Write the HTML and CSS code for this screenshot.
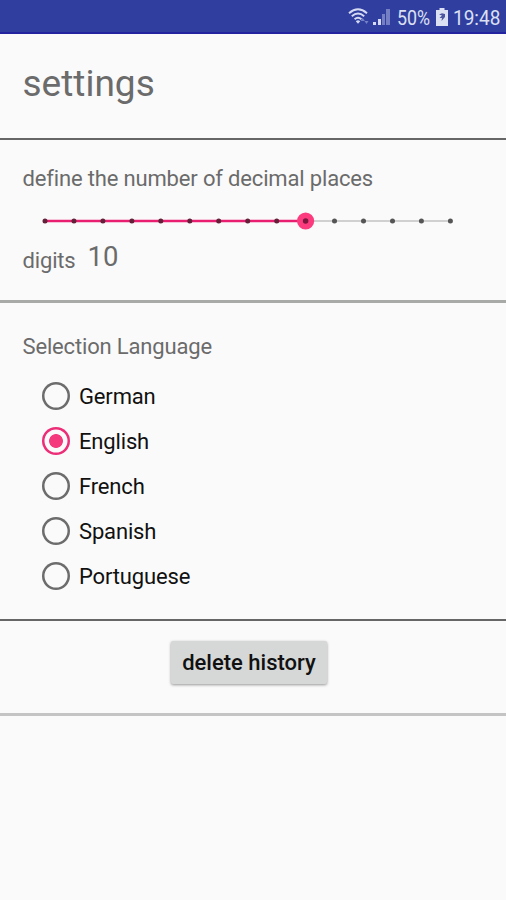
FILE: index.html
```html
<!DOCTYPE html>
<html lang="en">
<head>
<meta charset="utf-8">
<title>settings</title>
<link rel="stylesheet" href="styles.css">
</head>
<body>
<header class="status">
  <svg class="wifi" width="23" height="20" viewBox="0 0 23 20" fill="none" stroke="#d5daf2" stroke-width="1.9">
    <path d="M1 6.2Q10 -1.6 19 6.2M3.8 9.3Q10 3.8 16.2 9.3M6.6 12.3Q10 9.2 13.4 12.3"/>
    <path d="M7.8 14.2Q10 12.500 12.2 14.2L10 16.8Z" fill="#d5daf2" stroke="none"/>
    <path d="M12.500 14l2.200-3 2.200 3zM16.500 14h4l-2 3z" fill="#7482c7" stroke="none"/>
  </svg>
  <svg class="signal" width="18" height="18" viewBox="0 0 18 18">
    <path d="M0 14h3v3H0zM5 11h3v6H5z" fill="#d5daf2"/>
    <path d="M9 6h3v11H9zM13 1h4v16h-4z" fill="#7480c3"/>
  </svg>
  <span class="percent">50%</span>
  <svg class="battery" width="12" height="18" viewBox="0 0 12 18">
    <path d="M3.500 0h5v2H12v16H0V2h3.500z" fill="#dce0f3"/>
    <path d="M3 6.500 6 5.300 9 6v3L5.500 13 6 10 3.500 10 6 7.500z" fill="#4c579f"/>
  </svg>
  <span class="clock">19:48</span>
</header>
<main>
  <section class="heading"><h1>settings</h1></section>
  <section class="decimals">
    <p class="label define">define the number of decimal places</p>
    <svg class="slider" width="424" height="20" viewBox="0 0 424 20">
      <path d="M276 10H414" stroke="#d0d0d0" stroke-width="2"/>
      <path d="M9 10H270" stroke="#e91e70" stroke-width="2.400"/>
      <circle cx="269.600" cy="10" r="8.600" fill="#fb3b7e"/>
      <path class="ticks" d="M9 10h.01M37.960 10h.01M66.900 10h.01M95.900 10h.01M124.800 10h.01M153.800 10h.01M182.700 10h.01M211.700 10h.01M240.700 10h.01"/>
      <path class="ticks current" d="M269.600 10h.01"/>
      <path class="ticks rest" d="M298.500 10h.01M327.500 10h.01M356.500 10h.01M385.400 10h.01M414.400 10h.01"/>
    </svg>
    <div class="digits"><span class="label unit">digits</span><span class="value">10</span></div>
  </section>
  <section class="languages">
    <h2 class="label">Selection Language</h2>
    <ul>
      <li><span class="radio"></span><span>German</span></li>
      <li><span class="radio checked"></span><span>English</span></li>
      <li><span class="radio"></span><span>French</span></li>
      <li><span class="radio"></span><span>Spanish</span></li>
      <li><span class="radio"></span><span>Portuguese</span></li>
    </ul>
  </section>
  <section class="history"><button type="button">delete history</button></section>
</main>
</body>
</html>
```
FILE: styles.css
```css
* { box-sizing: border-box; }
body { margin: 0; min-height: 900px; background: #fafafa; color: #6b6b6b; font-family: Roboto, sans-serif; }
h1, h2, p, ul { margin: 0; padding: 0; font-weight: 400; }
svg { display: block; flex: none; }
.status { height: 34px; display: flex; align-items: center; padding: 2px 0 0 348px; background: #303f9f; border-bottom: 2px solid #2323a0; color: #dce0f3; font-size: 20px; white-space: nowrap; }
.signal { margin-left: 2px; }
.percent { width: 34px; padding-top: 2px; margin-left: 6px; transform: scaleX(.89); transform-origin: left; }
.battery { margin-left: 5px; }
.clock { padding-top: 2px; margin-left: 5px; transform: scaleX(.95); transform-origin: left; }
.heading { height: 106px; padding: 28px 22.500px 0; border-bottom: 2px solid #666; }
h1 { font-size: 37px; line-height: 44px; }
.label { font-size: 22px; line-height: 26px; letter-spacing: -.16px; }
.decimals { height: 163px; padding: 26px 22.500px 0; border-bottom: 3px solid #a8aaa7; }
.slider { margin: 19px 0 0 13.500px; }
.ticks { stroke: #622039; stroke-width: 5; stroke-linecap: round; }
.ticks.current { stroke: #7d163c; stroke-width: 5.500; }
.ticks.rest { stroke: #555; }
.digits { display: flex; align-items: baseline; margin-top: 10px; }
.unit { position: relative; top: 2px; }
.value { margin-left: 12px; font-size: 27.500px; line-height: 32px; }
.languages { height: 318px; padding: 31px 22.500px 0; border-bottom: 2px solid #666; }
ul { list-style: none; margin: 13px 0 0 19.500px; color: #111; font-size: 22px; letter-spacing: -.16px; }
li { height: 45px; display: flex; align-items: center; line-height: 26px; }
.radio { width: 28px; height: 28px; flex: none; border-radius: 50%; box-shadow: inset 0 0 0 2.500px #6c6c6c; margin-right: 9px; }
.radio + span { padding-top: 2px; }
.checked { box-shadow: inset 0 0 0 2.500px #ec2d77; background: radial-gradient(circle, #f4397d 6.500px, transparent 7.300px); }
.history { height: 95px; padding-top: 20px; display: flex; justify-content: center; align-items: flex-start; border-bottom: 3px solid #c4c4c4; }
button { width: 156px; height: 43px; margin-right: 8px; padding: 0; border: 0; border-radius: 2px; background: #d6d8d7; box-shadow: 0 1px 3px #0006; color: #111; font: 500 22px/43px Roboto, sans-serif; white-space: nowrap; }
```
